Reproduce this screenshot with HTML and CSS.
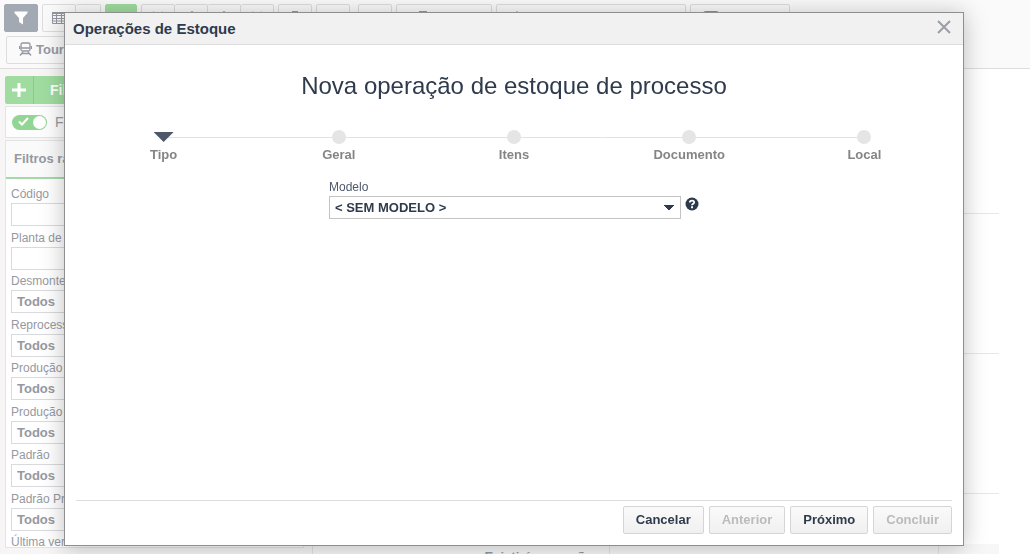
FILE: index.html
```html
<!DOCTYPE html>
<html lang="pt-BR">
<head>
    <meta charset="UTF-8">
    <meta name="viewport" content="width=device-width, initial-scale=1.0">
    <title>Operações de Estoque</title>
    <link rel="stylesheet" href="styles.css">
</head>
<body>

    <div class="page">
        <header class="toolbar">
            <div class="toolbar-row">
                <button class="tool tool-filter" aria-label="Filtro">
                    <svg width="14" height="14" viewBox="0 0 14 14" fill="#fff"><path d="M0.500 0.500h13v1.500L9 7v6.500L5 11V7L0.500 2z"/></svg>
                </button>
                <div class="tool-group">
                    <button class="tool w-icon" aria-label="Tabela">
                        <svg width="14" height="14" viewBox="0 0 14 14" fill="none" stroke="#9297a0"><path d="M.5 1.500h13v11H.5zM.5 4.500h13M.5 7.500h13M.5 10h13M4.500 2v10M9.500 2v10"/><path d="M0 2h14" stroke-width="2"/></svg>
                    </button>
                    <button class="tool w-small" aria-label="Opções"></button>
                </div>
                <button class="tool tool-add w-add" aria-label="Adicionar">
                    <svg width="12" height="14" viewBox="0 0 12 14" fill="#fff"><circle cx="6" cy="5" r="4"/></svg>
                </button>
                <div class="tool-group">
                    <button class="tool w-icon" aria-label="Primeiro"><svg width="12" height="14" viewBox="0 0 12 14" stroke="#aaa" fill="none" stroke-width="2"><path d="M1 1l5 5 5-5"/></svg></button>
                    <button class="tool w-icon" aria-label="Editar"><svg width="12" height="14" viewBox="0 0 12 14" stroke="#aaa" fill="none" stroke-width="2"><path d="M2 6l5-5 3 3"/></svg></button>
                    <button class="tool w-icon" aria-label="Duplicar"><svg width="12" height="14" viewBox="0 0 12 14" stroke="#aaa" fill="none" stroke-width="2"><path d="M2 6l4-5 4 5"/></svg></button>
                    <button class="tool w-icon" aria-label="Excluir"><svg width="12" height="14" viewBox="0 0 12 14" stroke="#aaa" fill="none" stroke-width="2"><path d="M1 1l10 10M11 1L1 11"/></svg></button>
                </div>
                <button class="tool w-icon" aria-label="Bloquear"><svg width="12" height="14" viewBox="0 0 12 14" stroke="#999" fill="none" stroke-width="2"><path d="M4 7V1h4v6"/></svg></button>
                <button class="tool w-icon tool-gap" aria-label="Imprimir"><svg width="12" height="14" viewBox="0 0 12 14" fill="#999"><path d="M1 1h9v2H1z"/></svg></button>
                <button class="tool w-icon" aria-label="Mais"></button>
                <button class="tool w-medium" aria-label="Documento"><svg width="12" height="14" viewBox="0 0 12 14" stroke="#999" fill="none" stroke-width="2"><path d="M1 13V1h6v6"/></svg></button>
                <button class="tool w-large" aria-label="Estoque"><svg width="12" height="14" viewBox="0 0 12 14" fill="#999"><path d="M4 0l5 5H-1z"/></svg></button>
                <button class="tool w-final" aria-label="Processo"><svg width="16" height="14" viewBox="0 0 16 14" fill="#8c929b"><rect y="0" width="16" height="10" rx="3"/></svg></button>
            </div>
            <div class="toolbar-row second">
                <button class="tool tool-tour">
                    <svg width="13" height="14" viewBox="0 0 13 14" fill="none" stroke="#9297a0" stroke-width="1.300"><rect x="2" y="1" width="9" height="8" rx="1.500"/><path d="M2 6h9M.5 4v3M12.500 4v3M4 10l-3 3.500M9 10l3 3.500M3 11.500h7"/></svg>
                    Tour
                </button>
            </div>
        </header>

        <div class="content">
            <aside class="sidebar">
                <div class="filter-add">
                    <button class="add-icon" aria-label="Novo filtro">
                        <svg width="14" height="14" viewBox="0 0 14 14" fill="#fff"><path d="M5.500 0h3v5.500H14v3H8.500V14h-3V8.500H0v-3h5.500z"/></svg>
                    </button>
                    <button class="add-label">Filtros</button>
                </div>
                <label class="toggle-row">
                    <input type="checkbox" class="toggle" checked>
                    <svg class="toggle-check" width="11" height="9" viewBox="0 0 11 9" fill="none" stroke="#fff" stroke-width="2"><path d="M1 4.500l3 3L10 1"/></svg>
                    <span>Filtro ativo</span>
                </label>
                <section class="panel">
                    <h2>Filtros rápidos</h2>
                    <div class="fields">
                        <div class="field"><label for="codigo">Código</label><input type="text" id="codigo"></div>
                        <div class="field"><label for="planta">Planta de produção</label><input type="text" id="planta"></div>
                        <div class="field"><label for="desmonte">Desmonte</label><select id="desmonte"><option>Todos</option></select></div>
                        <div class="field"><label for="reprocesso">Reprocesso</label><select id="reprocesso"><option>Todos</option></select></div>
                        <div class="field"><label for="producao1">Produção</label><select id="producao1"><option>Todos</option></select></div>
                        <div class="field"><label for="producao2">Produção</label><select id="producao2"><option>Todos</option></select></div>
                        <div class="field"><label for="padrao">Padrão</label><select id="padrao"><option>Todos</option></select></div>
                        <div class="field"><label for="padrao-pr">Padrão Produto</label><select id="padrao-pr"><option>Todos</option></select></div>
                        <div class="field"><span>Última versão</span></div>
                    </div>
                </section>
            </aside>
            <main class="main">
                <div class="line"></div>
                <div class="line"></div>
                <div class="line"></div>
                <div class="line"></div>
                <div class="grid-head">
                    <span>Existirá operação</span>
                    <span></span>
                </div>
            </main>
        </div>
    </div>

    <div class="modal" role="dialog" aria-labelledby="modalTitle">
        <div class="modal-header">
            <h1 id="modalTitle">Operações de Estoque</h1>
            <button class="close" aria-label="Fechar">
                <svg width="14" height="14" viewBox="0 0 14 14" stroke="#9b9fa6" stroke-width="2"><path d="M1 1l12 12M13 1L1 13"/></svg>
            </button>
        </div>
        <div class="modal-body">
            <h2 class="wizard-title">Nova operação de estoque de processo</h2>
            <ol class="steps">
                <li class="active"><span class="marker"></span>Tipo</li>
                <li><span class="marker"></span>Geral</li>
                <li><span class="marker"></span>Itens</li>
                <li><span class="marker"></span>Documento</li>
                <li><span class="marker"></span>Local</li>
            </ol>
            <div class="model">
                <label for="modelo">Modelo</label>
                <div class="model-row">
                    <select id="modelo"><option>&lt; SEM MODELO &gt;</option></select>
                    <button class="help" aria-label="Ajuda">
                        <svg width="14" height="14" viewBox="0 0 14 14"><circle cx="7" cy="7" r="6.500" fill="#2c394b"/><path d="M4.800 5.500C4.800 3 9.200 3 9.200 5.400 9.200 6.800 7 6.700 7 8.300" fill="none" stroke="#fff" stroke-width="1.800"/><path d="M6 9.300h2v1.900H6z" fill="#fff"/></svg>
                    </button>
                </div>
            </div>
        </div>
        <div class="modal-footer">
            <button class="btn">Cancelar</button>
            <button class="btn" disabled>Anterior</button>
            <button class="btn">Próximo</button>
            <button class="btn" disabled>Concluir</button>
        </div>
    </div>

</body>
</html>
```
FILE: styles.css
```css
* {
    box-sizing: border-box;
}
body {
    margin: 0;
    font-family: "Liberation Sans", Arial, sans-serif;
    font-size: 13px;
    color: #2f3b4d;
    background: #fff;
}
button, input, select {
    font-family: inherit;
    font-size: 13px;
    font-weight: bold;
    color: inherit;
}
h1, h2 {
    margin: 0;
}

/* Page behind the dialog */
.page {
    height: 100vh;
    overflow: hidden;
    display: flex;
    flex-direction: column;
    color: #9699a0;
}
.toolbar {
    padding: 4px;
    background: #fafafa;
    border-bottom: 1px solid #ddd;
}
.toolbar-row {
    display: flex;
    gap: 4px;
}
.toolbar-row.second {
    padding: 4px 2px 0;
}
.tool-group {
    display: flex;
}
.tool {
    display: flex;
    align-items: flex-start;
    justify-content: center;
    height: 28px;
    padding: 6px 0 0;
    background: #fafafa;
    border: 1px solid #ddd;
    border-radius: 2px;
}
.tool-group .tool + .tool {
    border-left: 0;
}
.tool-filter {
    width: 34px;
    background: #a3a9b3;
    border-color: #a3a9b3;
}
.tool-add {
    background: #a0dca0;
    border-color: #a0dca0;
}
.w-small {
    width: 25px;
}
.w-add {
    width: 32px;
}
.w-icon {
    width: 34px;
}
.tool-group .tool + .w-icon {
    width: 33px;
}
.tool-gap {
    margin-right: 4px;
}
.w-medium {
    width: 96px;
}
.w-large {
    width: 190px;
}
.w-final {
    width: 100px;
}
.w-medium,
.w-large,
.w-final {
    justify-content: flex-start;
    padding-left: 16px;
}
.w-medium {
    padding-left: 22px;
}
.w-final {
    padding-left: 12px;
}
.tool-tour {
    gap: 4px;
    width: 80px;
    padding-top: 5px;
    padding-left: 12px;
    justify-content: flex-start;
}
.content {
    flex: 1;
    display: flex;
}
.sidebar {
    width: 312px;
    padding: 7px 8px 0 5px;
    background: #f7f5f6;
}
.filter-add {
    display: flex;
    height: 28px;
    background: #a0dca0;
    border-radius: 2px;
    color: #fff;
}
.filter-add button {
    border: 0;
    background: none;
    padding: 0;
}
.filter-add .add-icon {
    display: flex;
    align-items: center;
    justify-content: center;
    width: 29px;
    border-right: 1px solid #8cc792;
}
.filter-add .add-label {
    padding-left: 16px;
    font-size: 14px;
}
.toggle-row {
    position: relative;
    display: flex;
    align-items: center;
    gap: 8px;
    height: 32px;
    margin-top: 2px;
    padding-left: 6px;
    background: #fdfdfd;
    border: 1px solid #e4e4e4;
    font-size: 14px;
}
.toggle {
    appearance: none;
    display: flex;
    justify-content: flex-end;
    width: 35px;
    height: 15px;
    margin: 0;
    border-radius: 8px;
    background: #92d694;
}
.toggle::after {
    content: "";
    width: 13px;
    height: 13px;
    margin: 1px;
    border-radius: 50%;
    background: #fff;
}
.toggle-check {
    position: absolute;
    left: 12px;
    top: 10px;
}
.panel {
    margin-top: 2px;
    height: 408px;
    overflow: hidden;
    background: #fff;
    border: 1px solid #e4e4e4;
}
.panel h2 {
    height: 38px;
    padding-left: 8px;
    border-bottom: 2px solid #a5d9a8;
    background: #fafafa;
    font-size: 13px;
    line-height: 36px;
}
.fields {
    padding: 7px 5px 0;
}
.field {
    display: flex;
    flex-direction: column;
    gap: 1px;
    margin-bottom: 4px;
    font-size: 12px;
    line-height: 16px;
}
.field:nth-child(even) {
    margin-bottom: 3px;
}
.field input,
.field select {
    appearance: none;
    height: 23px;
    padding: 0 5px;
    background: #fff;
    border: 1px solid #d8dadd;
    border-radius: 0;
}
.main {
    flex: 1;
    border-left: 1px solid #e2e2e2;
    padding-right: 31px;
    background: #fff;
}
.line {
    height: 140px;
    border-bottom: 1px solid #e8e8e8;
}
.line:first-child {
    height: 145px;
}
.line:nth-child(4) {
    height: 50px;
    border: 0;
}
.grid-head {
    display: flex;
    background: #f7f7f7;
}
.grid-head span {
    flex: 0 0 297px;
    padding: 5px 16px;
    border-right: 1px solid #e2e2e2;
    text-align: right;
    font-weight: bold;
}
.grid-head span + span {
    flex-basis: 329px;
}

/* Dialog */
.modal {
    position: fixed;
    inset: 12px 66px 8px 64px;
    display: flex;
    flex-direction: column;
    background: #fff;
    border: 1px solid #8e8e8e;
    box-shadow: 0 2px 22px rgba(0, 0, 0, 0.25);
}
.modal-header {
    display: flex;
    justify-content: space-between;
    height: 32px;
    padding: 7px 12px 0 8px;
    background: #f1f1f1;
    border-bottom: 1px solid #ddd;
}
.modal-header h1 {
    font-size: 15px;
}
.close,
.help {
    display: flex;
    align-items: flex-start;
    padding: 0;
    border: 0;
    background: none;
}
.help {
    padding-top: 1px;
}
.modal-body {
    flex: 1;
    padding: 27px 11px 0;
}
.wizard-title {
    font-size: 24px;
    font-weight: normal;
    line-height: 28px;
    text-align: center;
}
.steps {
    display: grid;
    grid-template-columns: repeat(5, 1fr);
    margin: 29px 0 0;
    padding: 0;
    list-style: none;
    color: #858585;
    font-weight: bold;
}
.steps li {
    display: flex;
    flex-direction: column;
    align-items: center;
    gap: 2px;
    line-height: 16px;
}
/* connector runs from the centre of one marker to the next */
.marker {
    display: flex;
    justify-content: center;
    align-items: center;
    width: 100%;
    height: 16px;
    background: linear-gradient(#e2e2e2, #e2e2e2) center / 100% 1px no-repeat;
}
.steps li:first-child .marker {
    background-size: 50% 1px;
    background-position: right center;
}
.steps li:last-child .marker {
    background-size: 50% 1px;
    background-position: left center;
}
.marker::before {
    content: "";
    width: 14px;
    height: 14px;
    border-radius: 50%;
    background: #e5e5e5;
}
.steps .active .marker::before {
    width: 20px;
    height: 10px;
    border-radius: 0;
    background: #4e586b;
    clip-path: polygon(0 0, 100% 0, 50% 100%);
}
.model {
    max-width: 370px;
    margin: 16px auto 0;
}
.model label {
    display: block;
    font-size: 12px;
    line-height: 16px;
    color: #4d586a;
}
.model-row {
    display: flex;
    gap: 4px;
    margin-top: 1px;
}
.model select {
    appearance: none;
    flex: 1;
    height: 23px;
    padding: 0 5px;
    border: 1px solid #c4c4c4;
    border-radius: 0;
    background: conic-gradient(from -45deg at 50% 100%, #2f3b4d 90deg, transparent 0) right 6px center / 10px 5px no-repeat, #fff;
}
.modal-footer {
    display: flex;
    justify-content: flex-end;
    gap: 5px;
    margin: 0 11px;
    padding: 5px 0 11px;
    border-top: 1px solid #ddd;
}
.btn {
    height: 28px;
    padding: 0 12px 2px;
    background: linear-gradient(#fafafa, #f0f0f0);
    border: 1px solid #d5d5d5;
    border-radius: 2px;
}
.btn:disabled {
    color: #bbb;
}
```
